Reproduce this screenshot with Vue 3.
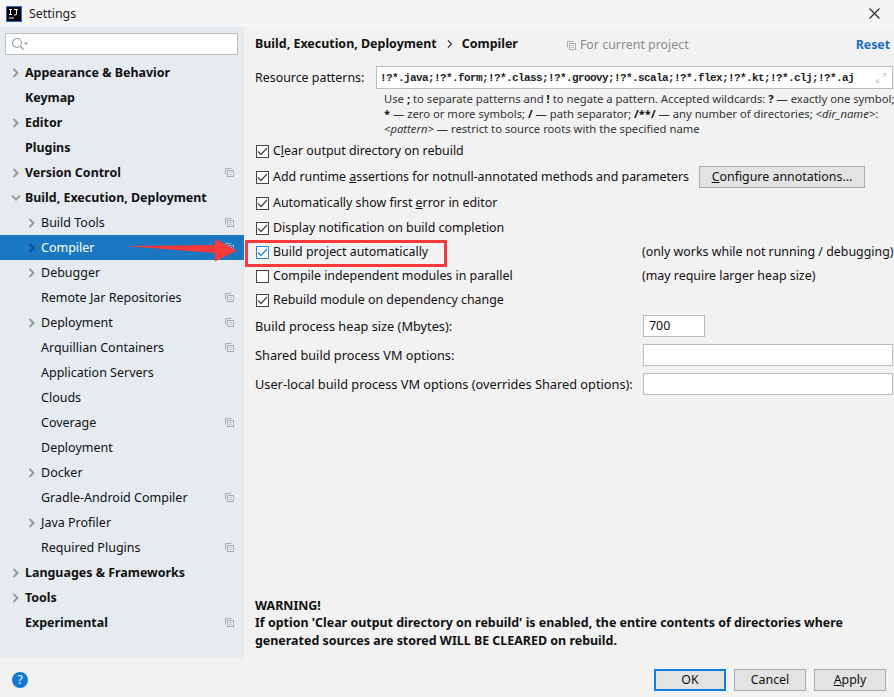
<script setup>
const nav = [
  { t: 'Appearance & Behavior', l: 0, a: 'r' },
  { t: 'Keymap', l: 0 },
  { t: 'Editor', l: 0, a: 'r' },
  { t: 'Plugins', l: 0 },
  { t: 'Version Control', l: 0, a: 'r', c: 1 },
  { t: 'Build, Execution, Deployment', l: 0, a: 'd' },
  { t: 'Build Tools', l: 1, a: 'r', c: 1 },
  { t: 'Compiler', l: 1, a: 'r', c: 1, s: 1 },
  { t: 'Debugger', l: 1, a: 'r' },
  { t: 'Remote Jar Repositories', l: 1, c: 1 },
  { t: 'Deployment', l: 1, a: 'r', c: 1 },
  { t: 'Arquillian Containers', l: 1, c: 1 },
  { t: 'Application Servers', l: 1 },
  { t: 'Clouds', l: 1 },
  { t: 'Coverage', l: 1, c: 1 },
  { t: 'Deployment', l: 1 },
  { t: 'Docker', l: 1, a: 'r' },
  { t: 'Gradle-Android Compiler', l: 1, c: 1 },
  { t: 'Java Profiler', l: 1, a: 'r' },
  { t: 'Required Plugins', l: 1, c: 1 },
  { t: 'Languages & Frameworks', l: 0, a: 'r' },
  { t: 'Tools', l: 0, a: 'r' },
  { t: 'Experimental', l: 0, c: 1 },
]
const checks = [
  { pre: 'C', u: 'l', post: 'ear output directory on rebuild', on: 1, h: 26 },
  { pre: 'Add runtime ', u: 'a', post: 'ssertions for notnull-annotated methods and parameters', on: 1, h: 26, btn: 1 },
  { pre: 'Automatically show first ', u: 'e', post: 'rror in editor', on: 1, h: 26 },
  { pre: 'Display notification on build completion', u: '', post: '', on: 1, h: 24 },
  { pre: 'Build project automatically', u: '', post: '', on: 1, h: 24, focus: 1, note: '(only works while not running / debugging)' },
  { pre: 'Compile independent modules in parallel', u: '', post: '', on: 0, h: 24, note: '(may require larger heap size)' },
  { pre: 'Rebuild module on dependency change', u: '', post: '', on: 1, h: 24 },
]
const fields = [
  { label: 'Build process heap size (Mbytes):', value: '700', small: 1 },
  { label: 'Shared build process VM options:', value: '' },
  { label: 'User-local build process VM options (overrides Shared options):', value: '' },
]
const patterns = '!?*.java;!?*.form;!?*.class;!?*.groovy;!?*.scala;!?*.flex;!?*.kt;!?*.clj;!?*.aj'
</script>

<template>
  <div class="win">
    <header class="title">
      <svg class="logo" width="16" height="16" viewBox="0 0 16 16">
        <rect x="0.5" y="0.5" width="15" height="15" fill="#000" stroke="#1a6fd0" />
        <path d="M3 3.5h3M4.5 3.5v5M3 8.5h3M8 3.5h4M10.5 3.5v4.5q0 1-1.2 1H8M3 12h5" stroke="#fff" stroke-width="1" fill="none" />
      </svg>
      <span class="title-text">Settings</span>
      <svg class="close" width="11" height="11" viewBox="0 0 11 11">
        <path d="M0.5 0.5L10.5 10.5M10.5 0.5L0.5 10.5" stroke="#222" stroke-width="1.1" />
      </svg>
    </header>

    <div class="main">
      <aside class="side">
        <div class="search">
          <svg width="18" height="14" viewBox="0 0 18 14">
            <circle cx="6" cy="6" r="4.5" fill="none" stroke="#9aa0a4" stroke-width="1.2" />
            <path d="M9.3 9.3L12.5 12.5" stroke="#9aa0a4" stroke-width="1.4" />
            <path d="M13 5.5h4l-2 2.5z" fill="#8a8f93" />
          </svg>
        </div>
        <ul class="tree">
          <li v-for="(n, i) in nav" :key="i" class="row" :class="{ sel: n.s, top: n.l === 0 }">
            <span class="arrow" :class="'lvl' + n.l">
              <svg v-if="n.a === 'r'" width="8" height="10" viewBox="0 0 8 10">
                <path d="M1.5 1L5.5 5L1.5 9" fill="none" :stroke="n.s ? '#0f4f82' : '#9b9b9b'" stroke-width="2" />
              </svg>
              <svg v-else-if="n.a === 'd'" width="10" height="8" viewBox="0 0 10 8">
                <path d="M1 1.5L5 5.5L9 1.5" fill="none" stroke="#9b9b9b" stroke-width="2" />
              </svg>
            </span>
            <span class="label">{{ n.t }}</span>
            <svg v-if="n.c" class="copy" width="9" height="9" viewBox="0 0 9 9">
              <path d="M0.5 6.5V0.5H6.5" fill="none" stroke="#a8afb5" />
              <rect x="2.5" y="2.5" width="6" height="6" fill="none" stroke="#a8afb5" />
              <path d="M4 4.5h3M4 6.5h3" stroke="#c5cacd" />
            </svg>
          </li>
        </ul>
      </aside>

      <section class="content">
        <div class="crumbs">
          <b>Build, Execution, Deployment</b>
          <svg class="sep" width="6" height="8" viewBox="0 0 6 8"><path d="M1 0.5L4.5 4L1 7.5" fill="none" stroke="#333" stroke-width="1.1" /></svg>
          <b>Compiler</b>
          <span class="scope">
            <svg width="9" height="9" viewBox="0 0 9 9">
              <path d="M0.5 6.5V0.5H6.5" fill="none" stroke="#a8afb5" />
              <rect x="2.5" y="2.5" width="6" height="6" fill="none" stroke="#a8afb5" />
              <path d="M4 4.5h3M4 6.5h3" stroke="#c5cacd" />
            </svg>
            For current project
          </span>
          <a class="reset">Reset</a>
        </div>

        <div class="patterns">
          <label class="plabel">Resource patterns:</label>
          <div class="pfield">
            <span class="mono">{{ patterns }}</span>
            <svg width="12" height="12" viewBox="0 0 12 12">
              <path d="M7 1h4v4zM1 11V7l4 4z" fill="#cfd3d6" />
              <path d="M9 3L7 5M3 9l2-2" stroke="#cfd3d6" />
            </svg>
          </div>
        </div>

        <div class="help">
          <div>Use <b>;</b> to separate patterns and <b>!</b> to negate a pattern. Accepted wildcards: <b>?</b> — exactly one symbol;</div>
          <div><b>*</b> — zero or more symbols; <b>/</b> — path separator; <b>/**/</b> — any number of directories; <i>&lt;dir_name&gt;</i>:</div>
          <div><i>&lt;pattern&gt;</i> — restrict to source roots with the specified name</div>
        </div>

        <div class="checks">
          <div v-for="(c, i) in checks" :key="i" class="check" :style="{ height: c.h + 'px' }">
            <span class="box" :class="{ focus: c.focus }">
              <svg v-if="c.on" width="11" height="9" viewBox="0 0 11 9">
                <path d="M1 4.5L4 7.5L10 1" fill="none" :stroke="c.focus ? '#2a86dc' : '#4a4a4a'" stroke-width="1.3" />
              </svg>
            </span>
            <span class="ctext">{{ c.pre }}<u v-if="c.u">{{ c.u }}</u>{{ c.post }}</span>
            <button v-if="c.btn" class="btn cfg"><u>C</u>onfigure annotations...</button>
            <span v-if="c.note" class="note">{{ c.note }}</span>
          </div>
        </div>

        <div class="fields">
          <div v-for="(f, i) in fields" :key="i" class="field">
            <span class="flabel">{{ f.label }}</span>
            <div class="finput" :class="{ small: f.small }">{{ f.value }}</div>
          </div>
        </div>

        <div class="warn">
          <div>WARNING!</div>
          <div>If option 'Clear output directory on rebuild' is enabled, the entire contents of directories where</div>
          <div>generated sources are stored WILL BE CLEARED on rebuild.</div>
        </div>
      </section>
    </div>

    <footer class="foot">
      <span class="q">?</span>
      <div class="actions">
        <button class="btn act primary">OK</button>
        <button class="btn act">Cancel</button>
        <button class="btn act"><u>A</u>pply</button>
      </div>
    </footer>

    <div class="redbox"></div>
    <svg class="redarrow" width="114" height="25" viewBox="0 0 114 25">
      <path d="M0 7L90 6V0L112 11.5L90 22.5V14z" fill="#f73a3a" />
    </svg>
  </div>
</template>

<style>
html, body { margin: 0; background: #f2f2f2; }
</style>

<style scoped>
* { box-sizing: border-box; }
.win {
  position: relative;
  width: 894px;
  height: 697px;
  overflow: hidden;
  background: #f2f2f2;
  color: #111;
  font: 12.4px/16px "Noto Sans", "Open Sans", sans-serif;
  display: flex;
  flex-direction: column;
}
b, .row.top .label, .warn { font-size: 12.45px; }
.title {
  height: 27px;
  flex: none;
  display: flex;
  align-items: center;
  padding: 0 14px 0 6px;
  background: #f5f5f5;
}
.logo { margin-right: 7px; }
.title-text { color: #222; }
.close { margin-left: auto; margin-top: -1px; }
.main { flex: 1; display: flex; min-height: 0; }
.side {
  width: 244px;
  flex: none;
  background: #e6ebf0;
  padding-top: 6px;
}
.search {
  margin-left: 5px;
  width: 233px;
  height: 22px;
  background: #fff;
  border: 1px solid #b9bdc0;
  display: flex;
  align-items: center;
  padding-left: 5px;
}
.tree { list-style: none; margin: 5px 0 0; padding: 0; }
.row {
  height: 25px;
  display: flex;
  align-items: center;
  position: relative;
  color: #111;
  font-size: 12.5px;
}
.row.top .label { font-weight: 700; }
.row.sel { background: #1a77c2; color: #fff; }
.arrow {
  flex: none;
  display: flex;
  align-items: center;
  justify-content: center;
  width: 10px;
}
.arrow.lvl0 { margin-left: 11px; margin-right: 4px; }
.arrow.lvl1 { margin-left: 27px; margin-right: 4px; }
.copy { position: absolute; left: 225px; top: 8px; }
.content {
  flex: 1;
  min-width: 0;
  padding: 8px 1px 0 11px;
  display: flex;
  flex-direction: column;
}
.crumbs {
  display: flex;
  align-items: center;
  height: 17px;
}
.sep { margin: 0 9px 0 10px; }
.scope {
  margin-left: 49px;
  color: #8c8c8c;
  display: flex;
  align-items: center;
  gap: 4px;
  margin-top: 3px;
}
.reset {
  margin-left: auto;
  margin-right: 3px;
  color: #1a6fc0;
  font-weight: 700;
  font-size: 12.3px;
  margin-top: 3px;
}
.patterns {
  display: flex;
  align-items: center;
  margin-top: 14px;
}
.plabel { width: 121px; flex: none; }
.pfield {
  flex: 1;
  height: 23px;
  background: #fff;
  border: 1px solid #b9bdc0;
  display: flex;
  align-items: center;
  justify-content: space-between;
  padding: 0 5px 0 3px;
}
.mono {
  font: 700 11px/16px "Liberation Mono", monospace;
  letter-spacing: -0.6px;
  color: #222;
}
.help {
  margin: 2px 0 0 129px;
  font-size: 11.25px;
  line-height: 15px;
  color: #333;
  white-space: nowrap;
}
.help b { color: #111; font-size: 11.25px; }
.checks { margin-top: 2px; }
.check {
  display: flex;
  align-items: center;
  white-space: nowrap;
}
.box {
  width: 13px;
  height: 13px;
  flex: none;
  background: #fff;
  border: 1px solid #444;
  display: flex;
  align-items: center;
  justify-content: center;
  margin: 0 4px 0 1px;
}
.box.focus { border-color: #2a86dc; }
.ctext { color: #111; }
.note { position: absolute; left: 642px; }
.btn {
  font: inherit;
  color: #111;
  background: #e3e3e3;
  border: 1px solid #adadad;
  padding: 0;
  height: 22px;
}
.cfg { width: 166px; margin-left: 10px; }
.fields { margin-top: -1px; }
.field {
  height: 29px;
  display: flex;
  align-items: center;
  white-space: nowrap;
}
.flabel { width: 388px; flex: none; font-size: 12.75px; }
.finput {
  width: 250px;
  height: 22px;
  background: #fff;
  border: 1px solid #b9bdc0;
  padding-left: 5px;
  line-height: 20px;
}
.finput.small { width: 62px; }
.warn {
  margin-top: auto;
  margin-bottom: 9px;
  font-weight: 700;
  line-height: 17.5px;
  white-space: nowrap;
}
.foot {
  height: 39px;
  flex: none;
  display: flex;
  align-items: center;
  padding: 5px 8px 0 12px;
  background: #f2f2f2;
}
.q {
  width: 16px;
  height: 16px;
  border-radius: 50%;
  background: #1478d4;
  color: #fff;
  text-align: center;
  font-size: 12px;
  line-height: 16px;
}
.actions { margin-left: auto; display: flex; gap: 8px; }
.act { width: 72px; }
.primary { border: 2px solid #0f80dc; }
.redbox {
  position: absolute;
  left: 245px;
  top: 240px;
  width: 202px;
  height: 27px;
  border: 3px solid #f53a3d;
}
.redarrow { position: absolute; left: 125px; top: 239px; }
</style>
